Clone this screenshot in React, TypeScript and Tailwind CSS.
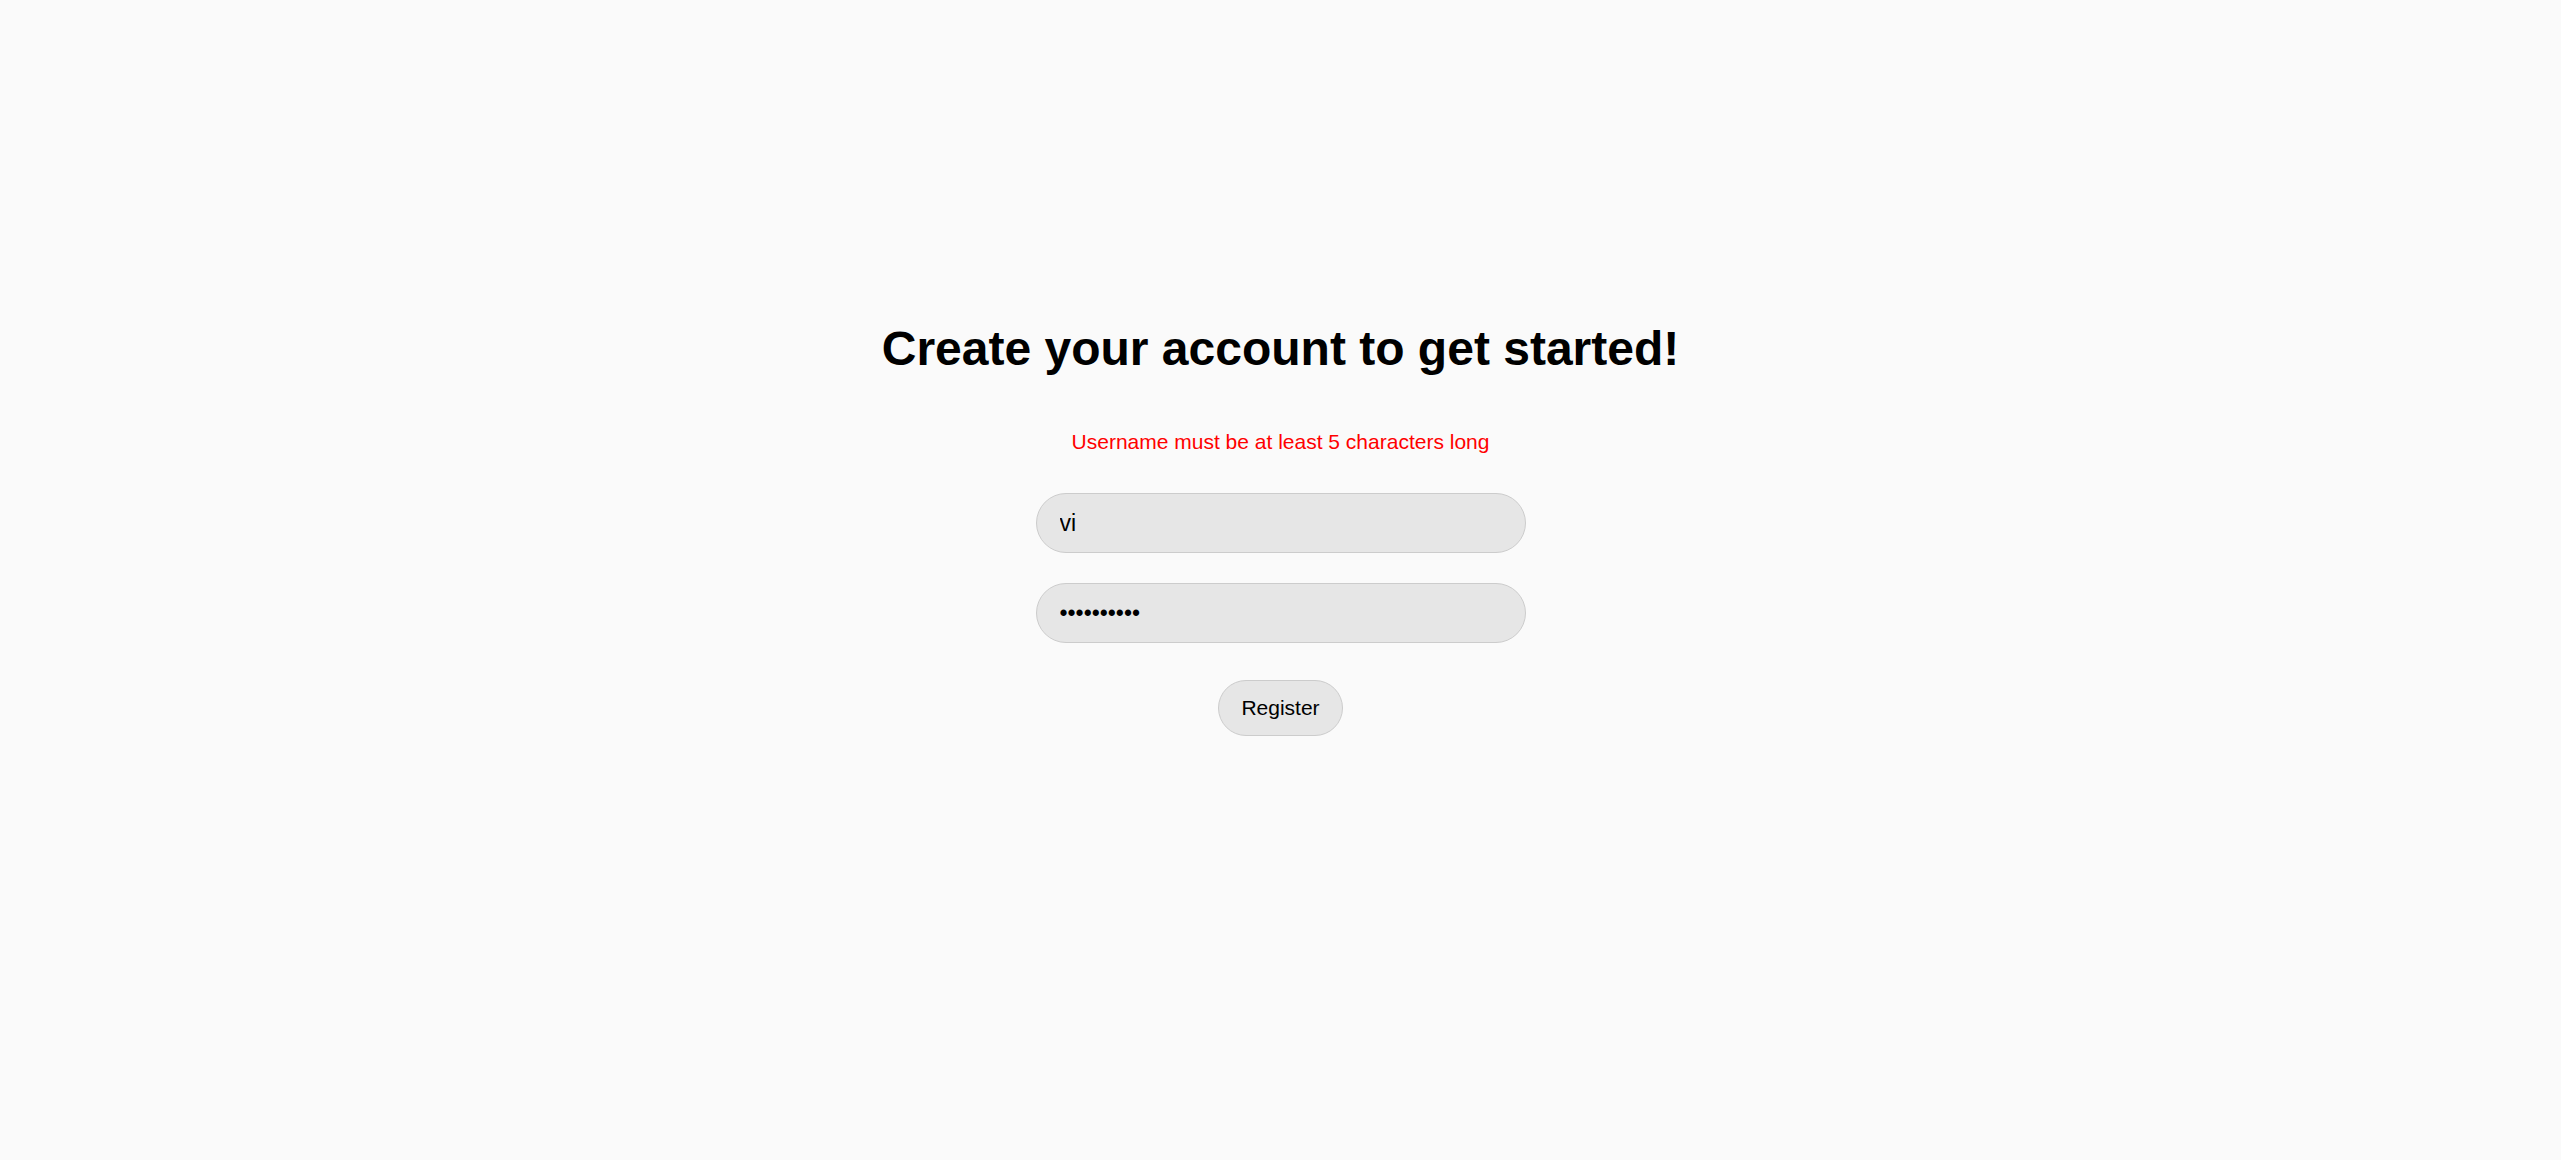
import { useState } from 'react';

export default function App() {
  const [username, setUsername] = useState('vi');
  const [password, setPassword] = useState('abcdefghij');

  return (
    <div className="min-h-screen w-full bg-[#fafafa] font-['Liberation_Sans',Arial,sans-serif] text-black">
      <div className="flex flex-col items-center pt-[321px]">
        <h1 className="text-[48px] leading-[normal] font-bold">Create your account to get started!</h1>

        <p className="mt-[54px] text-[21px] leading-[normal] text-[#ff0000]">
          Username must be at least 5 characters long
        </p>

        <form className="mt-[39px] flex flex-col items-center" onSubmit={(e) => e.preventDefault()}>
          <input
            type="text"
            value={username}
            onChange={(e) => setUsername(e.target.value)}
            className="h-[60px] w-[490px] rounded-full border border-[#cccccc] bg-[#e6e6e6] px-[23px] text-[23px] outline-none"
          />
          <input
            type="password"
            value={password}
            onChange={(e) => setPassword(e.target.value)}
            className="mt-[30px] h-[60px] w-[490px] rounded-full border border-[#cccccc] bg-[#e6e6e6] px-[23px] text-[23px] outline-none"
          />
          <button
            type="submit"
            className="mt-[37px] rounded-full border border-[#cccccc] bg-[#e6e6e6] px-[22px] py-[15px] text-[21px] leading-[normal]"
          >
            Register
          </button>
        </form>
      </div>
    </div>
  );
}
